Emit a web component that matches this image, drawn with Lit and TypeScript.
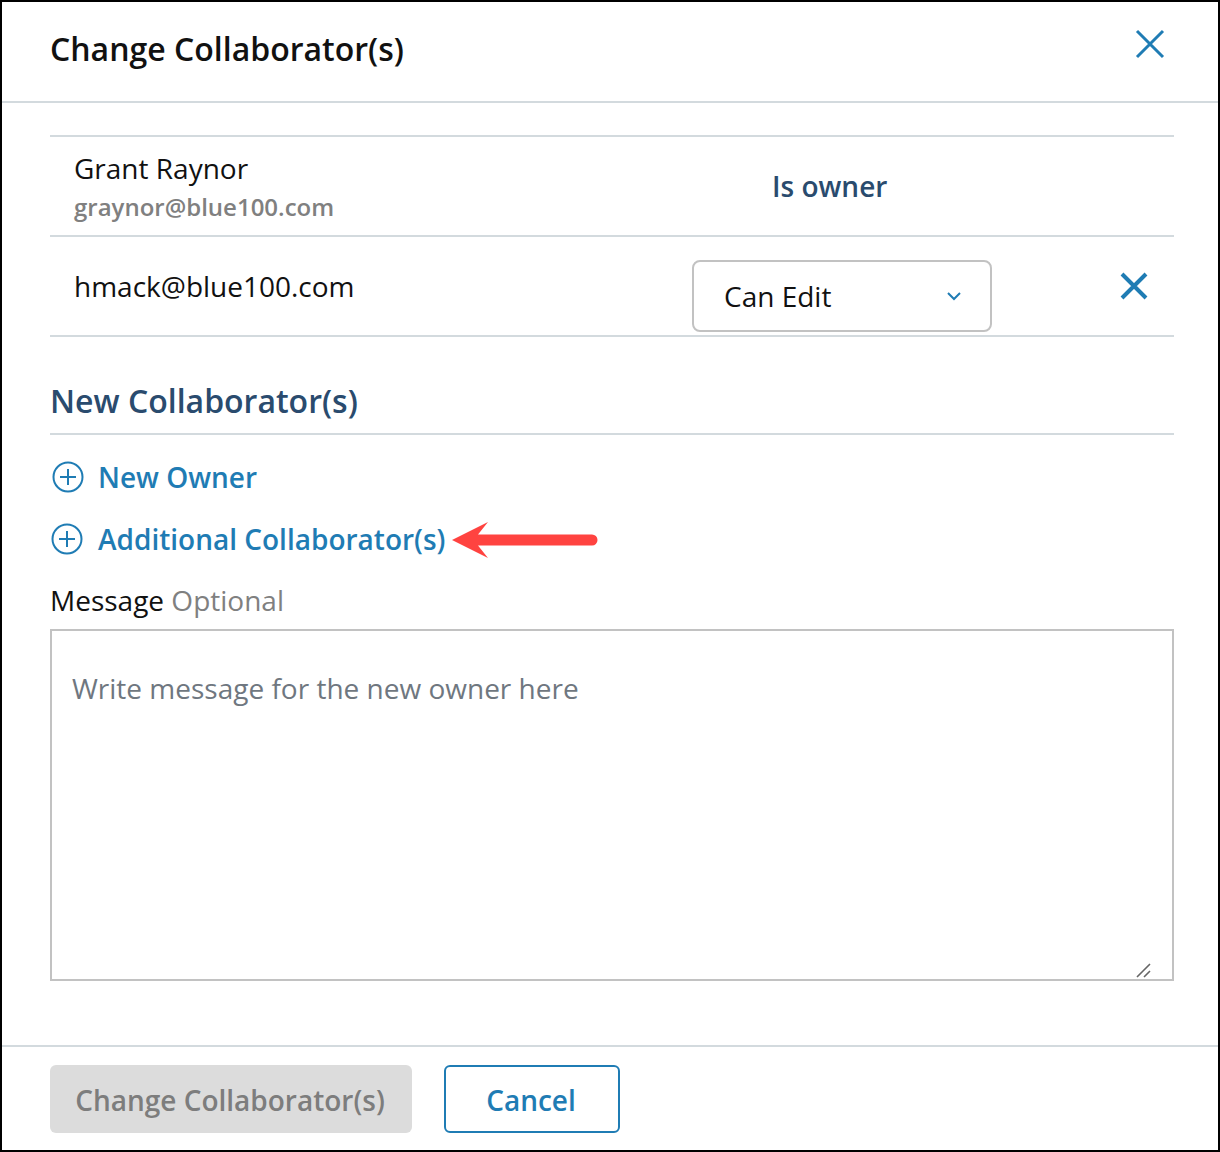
import { LitElement, html, css } from "lit";
import { customElement } from "lit/decorators.js";

@customElement("app-root")
export class AppRoot extends LitElement {
  static styles = css`
    :host {
      display: flex;
      flex-direction: column;
      width: 1220px;
      height: 1152px;
      box-sizing: border-box;
      border: 2px solid #000;
      background: #fff;
      font-family: "Open Sans", "Noto Sans", sans-serif;
      color: #111;
      position: relative;
      overflow: hidden;
    }
    * { box-sizing: border-box; }
    .header {
      height: 101px;
      flex: none;
      border-bottom: 2px solid #d3dade;
      padding: 0 48px;
      display: flex;
      justify-content: space-between;
      align-items: flex-start;
    }
    .title {
      margin: 25px 0 0;
      font-size: 32px;
      line-height: 44px;
      font-weight: 600;
      color: #111;
    }
    .close { margin: 27px 5px 0 0; display: block; }
    .body { flex: 1; padding: 32px 44px 0 48px; display: flex; flex-direction: column; }
    .row {
      height: 100px;
      border-top: 2px solid #d3dade;
      display: grid;
      grid-template-columns: 642px 300px 1fr;
      padding-left: 24px;
      position: relative;
    }
    .row.last { height: 102px; border-bottom: 2px solid #d3dade; }
    .name { font-size: 28px; line-height: 38px; margin-top: 12px; }
    .email-sub { font-size: 24px; line-height: 32px; font-weight: 600; color: #808080; margin-top: 4px; }
    .email { font-size: 28px; line-height: 38px; margin-top: 30px; }
    .owner { grid-column: 2 / 4; font-size: 28px; line-height: 38px; font-weight: 600; color: #2a4b6e; padding-left: 56px; margin-top: 30px; }
    .select {
      margin: 23px 0 0 -24px;
      width: 300px;
      height: 72px;
      border: 2px solid #c2c2c2;
      border-radius: 8px;
      display: flex;
      align-items: center;
      justify-content: space-between;
      padding: 0 29px 0 30px;
      font-size: 28px;
    }
    .rm { margin: 35px 0 0 104px; display: block; }
    h2 {
      margin: 42px 0 0;
      font-size: 32px;
      line-height: 44px;
      font-weight: 600;
      color: #2a4b6e;
      height: 56px;
      border-bottom: 2px solid #d3dade;
    }
    .link {
      display: flex;
      align-items: center;
      font-size: 28px;
      line-height: 40px;
      font-weight: 600;
      color: #1f7cb4;
      position: relative;
    }
    .link.a { margin-top: 22px; padding-left: 2px; gap: 14px; }
    .link.b { margin-top: 22px; padding-left: 1px; gap: 15px; }
    .arrow { position: absolute; left: 402px; top: 3px; }
    .label { margin-top: 21px; font-size: 28px; line-height: 40px; }
    .label span { color: #808080; }
    .field { position: relative; margin-top: 9px; height: 352px; }
    textarea {
      display: block;
      width: 1124px;
      height: 352px;
      border: 2px solid #c2c2c2;
      border-radius: 0;
      padding: 37px 20px;
      font: 400 28px/40px "Open Sans", "Noto Sans", sans-serif;
      outline: none;
      resize: none;
    }
    textarea::placeholder { color: #6f7780; opacity: 1; }
    .grip { position: absolute; right: 22px; bottom: 2px; display: block; }
    .footer {
      height: 105px;
      flex: none;
      border-top: 2px solid #d3dade;
      padding: 18px 0 0 48px;
      display: flex;
      gap: 32px;
      align-items: flex-start;
    }
    .btn {
      height: 68px;
      border-radius: 6px;
      font-size: 28px;
      font-weight: 600;
      padding: 2px 2px 0 0;
      display: flex;
      align-items: center;
      justify-content: center;
    }
    .primary { width: 362px; background: #dcdcdc; color: #7d7d7d; }
    .cancel { width: 176px; border: 2px solid #1f7cb4; color: #1f7cb4; background: #fff; }
  `;

  private plus() {
    return html`<svg width="32" height="32" viewBox="0 0 32 32" fill="none" stroke="#1f7cb4" stroke-width="2">
      <circle cx="16" cy="16" r="14.5"></circle><path d="M16 8v16M8 16h16"></path></svg>`;
  }

  render() {
    return html`
      <div class="header">
        <h1 class="title">Change Collaborator(s)</h1>
        <svg class="close" width="30" height="30" viewBox="0 0 30 30" fill="none" stroke="#1f7cb4" stroke-width="3"><path d="M2 2l26 26M28 2L2 28"></path></svg>
      </div>
      <div class="body">
        <div class="row">
          <div>
            <div class="name">Grant Raynor</div>
            <div class="email-sub">graynor@blue100.com</div>
          </div>
          <div class="owner">Is owner</div>
        </div>
        <div class="row last">
          <div class="email">hmack@blue100.com</div>
          <div class="select">
            <span>Can Edit</span>
            <svg width="14" height="10" viewBox="0 0 14 10" fill="none" stroke="#1f7cb4" stroke-width="2"><path d="M1 2l6 6 6-6"></path></svg>
          </div>
          <svg class="rm" width="28" height="28" viewBox="0 0 28 28" fill="none" stroke="#1f7cb4" stroke-width="4"><path d="M2 2l24 24M26 2L2 26"></path></svg>
        </div>
        <h2>New Collaborator(s)</h2>
        <div class="link a">${this.plus()}<span>New Owner</span></div>
        <div class="link b">${this.plus()}<span>Additional Collaborator(s)</span>
          <svg class="arrow" width="146" height="36" viewBox="0 0 146 36">
            <path d="M0 18L36 0L26 12.5H140a5.5 5.5 0 0 1 0 11H26L36 36Z" fill="#ff4340"></path>
          </svg>
        </div>
        <div class="label">Message <span>Optional</span></div>
        <div class="field">
          <textarea placeholder="Write message for the new owner here"></textarea>
          <svg class="grip" width="16" height="16" viewBox="0 0 16 16" fill="none" stroke="#666" stroke-width="1.6"><path d="M1 14L14 1M8 14l6-6"></path></svg>
        </div>
      </div>
      <div class="footer">
        <div class="btn primary">Change Collaborator(s)</div>
        <div class="btn cancel">Cancel</div>
      </div>
    `;
  }
}
